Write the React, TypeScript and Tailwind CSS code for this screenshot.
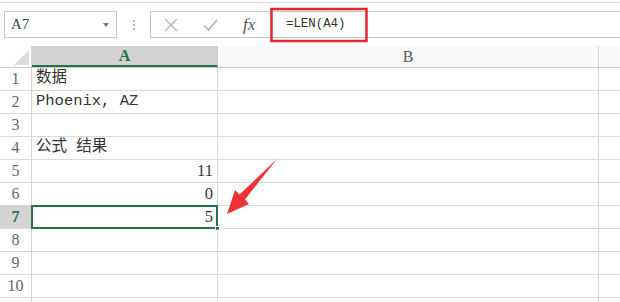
const mono = "font-['Liberation_Mono','Noto_Sans_CJK_SC',monospace]";
const serif = "font-['Liberation_Serif','Noto_Sans_CJK_SC',serif]";

const rows: { n: number; text?: string; right?: boolean }[] = [
  { n: 1, text: "数据" },
  { n: 2, text: "Phoenix, AZ" },
  { n: 3 },
  { n: 4, text: "公式 结果" },
  { n: 5, text: "11", right: true },
  { n: 6, text: "0", right: true },
  { n: 7, text: "5", right: true },
  { n: 8 },
  { n: 9 },
  { n: 10 },
];

const App = () => {
  return (
    <div
      className={`relative w-[620px] h-[302px] overflow-hidden bg-white text-[#333] ${mono}`}
    >
      {/* formula bar */}
      <div className="mt-[2px] h-[44px] border-t border-[#dadada] flex items-center">
        <div className="ml-[4px] w-[113px] h-[27px] border border-[#c6c6c6] flex items-center justify-between pl-[6px] pr-[7px]">
          <span className={`text-[15px] text-[#444] ${serif}`}>A7</span>
          <span className="w-0 h-0 border-x-[3px] border-x-transparent border-t-[4px] border-t-[#777]" />
        </div>
        <div className="w-[33px] flex flex-col items-center gap-[2px]">
          <span className="w-[2px] h-[2px] bg-[#b8b8b8]" />
          <span className="w-[2px] h-[2px] bg-[#b8b8b8]" />
          <span className="w-[2px] h-[2px] bg-[#b8b8b8]" />
        </div>
        <div className="flex-1 h-[27px] border-y border-l border-[#c6c6c6] flex items-center">
          <div className="w-[118px] h-full flex items-center">
            <svg width="40" height="26" viewBox="0 0 40 26" className="shrink-0">
              <path d="M14 7 L26 19 M26 7 L14 19" stroke="#b4b4b4" strokeWidth="1.4" fill="none" />
            </svg>
            <svg width="38" height="26" viewBox="0 0 38 26" className="shrink-0">
              <path d="M13 13.5 L17.5 18 L26 8" stroke="#b4b4b4" strokeWidth="1.6" fill="none" />
            </svg>
            <span className={`ml-[14px] text-[17px] italic text-[#555] ${serif}`}>fx</span>
          </div>
          <div className="h-full flex-1 flex items-center pl-[17px]">
            <span className="text-[12.4px] text-[#333]">=LEN(A4)</span>
          </div>
        </div>
      </div>

      {/* column headers */}
      <div className="flex h-[22px] border-b border-[#c9c9c9]">
        <div className="w-[32px] border-r border-[#d4d4d4] flex items-end justify-end pr-[2px] pb-[2px]">
          <span className="w-0 h-0 border-l-[15px] border-l-transparent border-b-[15px] border-b-[#dcdcdc]" />
        </div>
        <div className="w-[186px] bg-[#d3d3d3] border-b-2 border-[#217346] border-r border-r-[#c9c9c9] flex items-center justify-center">
          <span className={`text-[16px] font-bold text-[#217346] ${serif}`}>A</span>
        </div>
        <div className="w-[381px] bg-[#fafafa] border-r border-[#d4d4d4] flex items-center justify-center">
          <span className={`text-[16px] text-[#555] ${serif}`}>B</span>
        </div>
        <div className="flex-1 bg-[#fafafa]" />
      </div>

      {/* rows */}
      {rows.map((r) => {
        const sel = r.n === 7;
        return (
          <div key={r.n} className="flex h-[23px] border-b border-[#d9d9d9]">
            <div
              className={`w-[32px] border-r border-[#d4d4d4] flex items-center justify-center text-[16px] ${serif} ${
                sel ? "bg-[#d3d3d3] text-[#217346] font-bold" : "text-[#666]"
              }`}
            >
              {r.n}
            </div>
            <div
              className={`relative w-[186px] border-r border-[#d9d9d9] flex items-center px-[4px] ${
                r.right ? "justify-end" : "justify-start"
              }`}
            >
              {r.text && (
                <span
                  className={`whitespace-pre leading-none ${
                    r.right ? `text-[16.5px] ${serif}` : "text-[15.5px]"
                  }`}
                >
                  {r.text}
                </span>
              )}
              {sel && (
                <>
                  <div className="absolute -top-[1px] -left-[1px] -right-[1px] -bottom-[1px] border-2 border-[#217346]" />
                  <div className="absolute -right-[3px] -bottom-[3px] w-[5px] h-[5px] bg-[#217346] border border-white" />
                </>
              )}
            </div>
            <div className="w-[381px] border-r border-[#d4d4d4]" />
            <div className="flex-1" />
          </div>
        );
      })}
      <div className="flex h-[23px]">
        <div className="w-[32px] border-r border-[#d4d4d4]" />
        <div className="w-[186px] border-r border-[#d9d9d9]" />
        <div className="w-[381px] border-r border-[#d4d4d4]" />
      </div>

      {/* annotations */}
      <svg
        className="absolute inset-0 pointer-events-none"
        width="620"
        height="302"
        viewBox="0 0 620 302"
      >
        <rect x="271.5" y="9" width="95" height="32" fill="none" stroke="#e5262d" strokeWidth="2.5" />
        <path
          d="M277 159 L245 199.5 L249 204 L227 214 L235 190 L239.5 194.5 Z"
          fill="#ee3338"
        />
      </svg>
    </div>
  );
};

export default App;
